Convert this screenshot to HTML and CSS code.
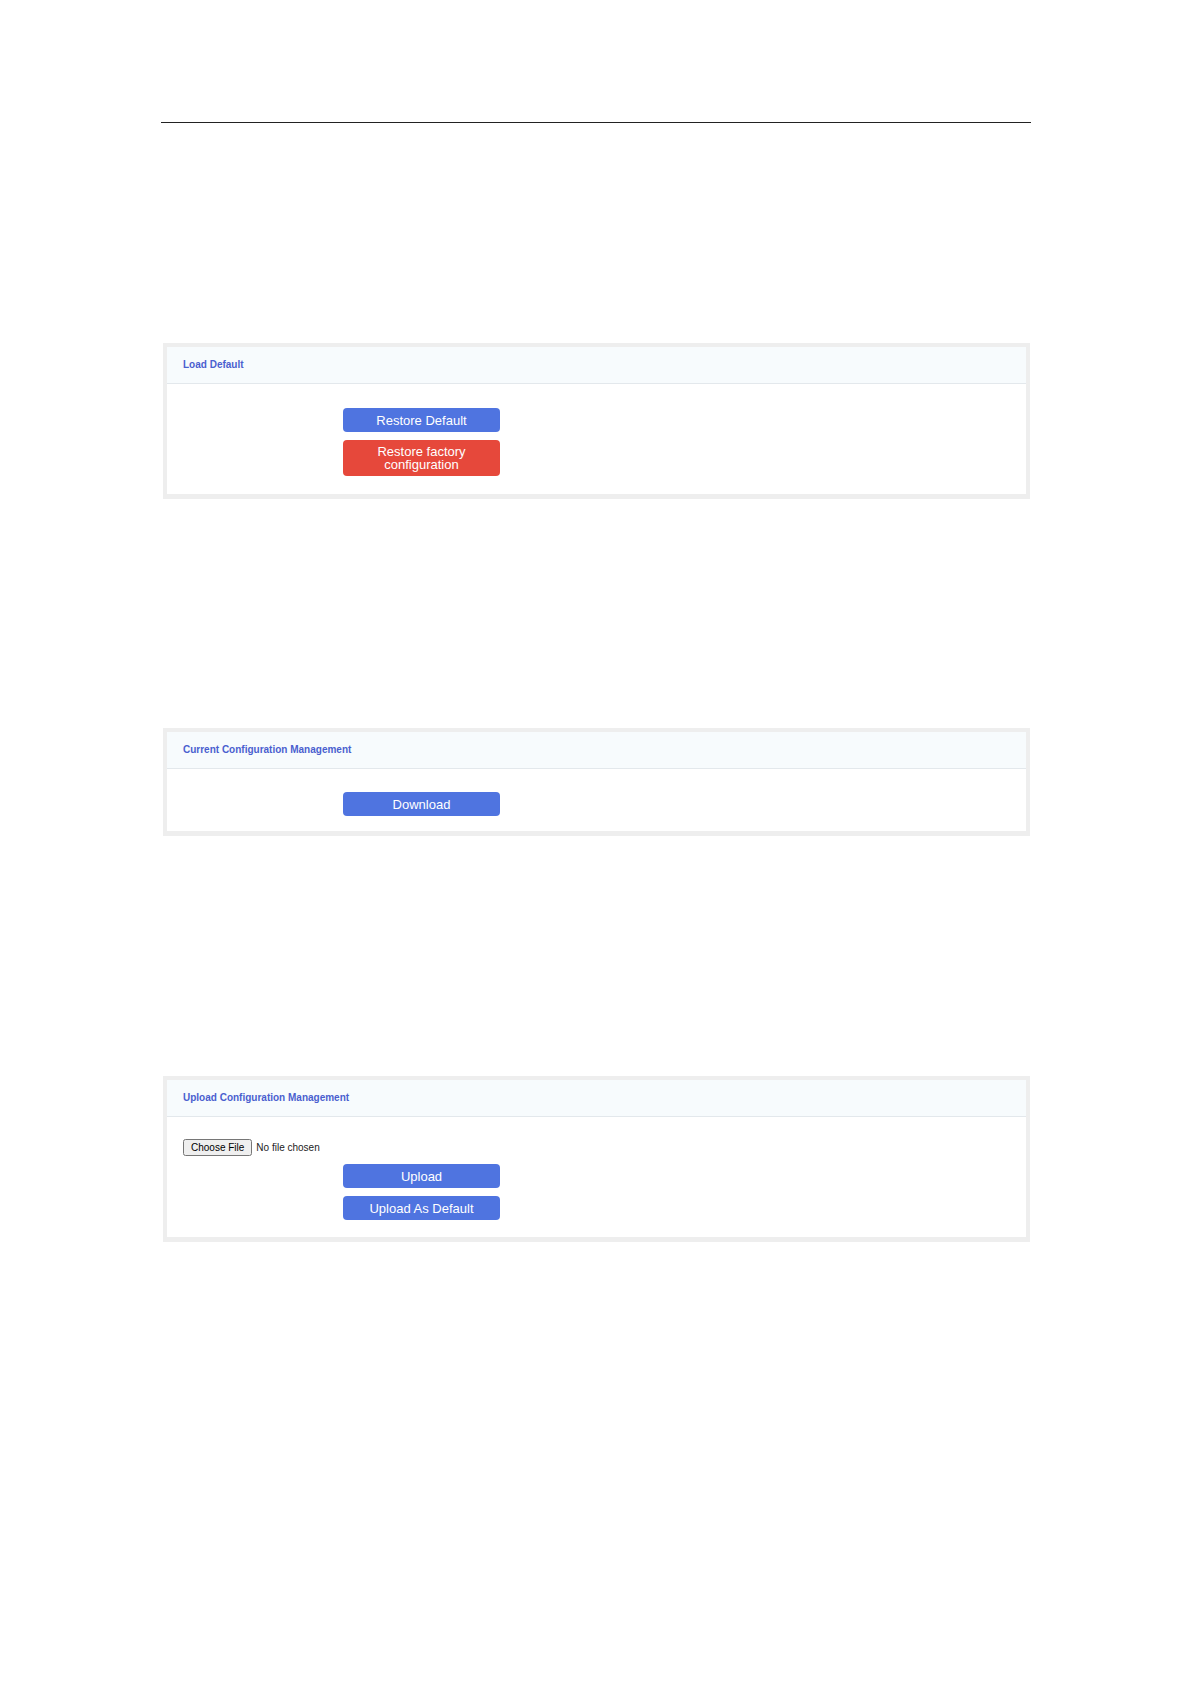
FILE: index.html
```html
<!DOCTYPE html>
<html lang="en">
<head>
  <meta charset="UTF-8">
  <title>Configuration Management</title>
  <link rel="stylesheet" href="styles.css">
</head>
<body>
  <div class="page">
    <hr class="top-rule">

    <div class="panel panel-load">
      <div class="panel-head">Load Default</div>
      <div class="panel-body">
        <div class="actions">
          <button class="btn">Restore Default</button>
          <button class="btn btn-red">Restore factory<br>configuration</button>
        </div>
      </div>
    </div>

    <div class="panel panel-current">
      <div class="panel-head">Current Configuration Management</div>
      <div class="panel-body">
        <div class="actions">
          <button class="btn">Download</button>
        </div>
      </div>
    </div>

    <div class="panel panel-upload">
      <div class="panel-head">Upload Configuration Management</div>
      <div class="panel-body">
        <input type="file" class="file-input">
        <div class="actions">
          <button class="btn">Upload</button>
          <button class="btn">Upload As Default</button>
        </div>
      </div>
    </div>
  </div>
</body>
</html>
```

FILE: styles.css
```css
body { margin: 0; background: #fff; font-family: "Liberation Sans", Arial, sans-serif; }
.page { width: 870px; margin-left: 161px; padding-top: 122px; padding-bottom: 200px; }
.top-rule { margin: 0; border: 0; border-top: 1.5px solid #222; }

.panel { margin-left: 2px; width: 859px; border: 4px solid #eeeeee; border-bottom-width: 5px; background: #fff; }
.panel-load { margin-top: 220px; }
.panel-current { margin-top: 229px; }
.panel-upload { margin-top: 240px; }

.panel-head { height: 36px; line-height: 36px; padding-left: 16px; background: #f7fbfd; border-bottom: 1px solid #e3e8ec; color: #4a5fcf; font-size: 10px; font-weight: bold; }
.panel-body { padding: 24px 16px 18px 16px; }
.panel-current .panel-body { padding: 23px 16px 15px 16px; }
.panel-upload .panel-body { padding: 22px 16px 17px 16px; }

.actions { display: flex; flex-direction: column; gap: 8px; margin-left: 160px; width: 157px; }
.file-input + .actions { margin-top: 8px; }

.btn { width: 157px; min-height: 24px; padding: 2px 4px; border: 0; border-radius: 4px; background: #4f74e0; color: #fff; font-family: "Liberation Sans", Arial, sans-serif; font-size: 13px; line-height: 13px; cursor: pointer; }
.btn-red { background: #e6483b; min-height: 36px; }

.file-input { display: block; font-family: "Liberation Sans", Arial, sans-serif; font-size: 10px; color: #222; }
```
